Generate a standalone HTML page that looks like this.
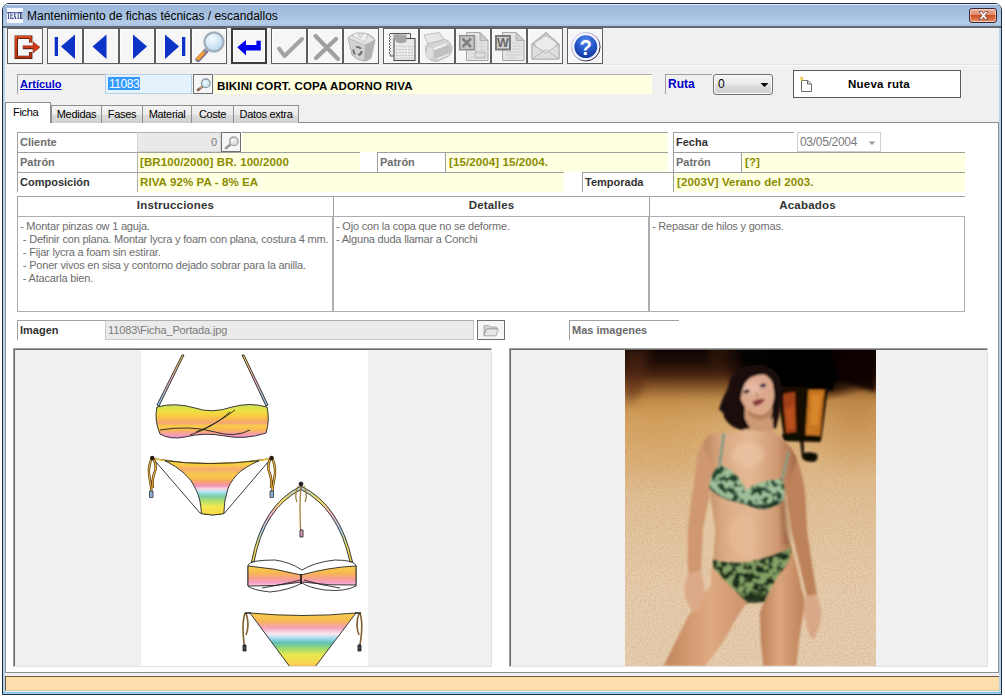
<!DOCTYPE html>
<html lang="es">
<head>
<meta charset="utf-8">
<title>Mantenimiento de fichas técnicas / escandallos</title>
<style>
*{box-sizing:border-box;margin:0;padding:0}
html,body{width:1005px;height:697px;overflow:hidden;background:#fff}
body{font-family:"Liberation Sans",sans-serif;font-size:11px;color:#000;position:relative}
.a{position:absolute;white-space:nowrap;overflow:hidden}
#win{left:2px;top:3px;width:1000px;height:692px;background:#b9d1ea;border:1px solid #1c2b3a;border-radius:7px 7px 0 0}
#title{left:3px;top:4px;width:998px;height:24px;background:linear-gradient(#e4edf8 0,#e4edf8 1px,#9cb7d9 1px,#a3bedf 35%,#b3cbe8 80%,#a9c0dc 91%,#5d6975 92%,#5d6975 100%);font-size:12px;line-height:25px;color:#000;border-radius:5px 5px 0 0}
#client{left:5px;top:28px;width:994px;height:664px;background:#f0f0f0}
.tb{top:28px;width:36px;height:36px;background:#f6f6f6;border:1px solid #5e5e5e;box-shadow:inset 0 0 0 1px #fbfbfb}
.lbl{background:#fff;border-top:1px solid #a0a0a0;border-left:1px solid #a0a0a0;font-weight:bold;height:20px;line-height:17px;padding-left:2px;padding-top:1px;font-size:11px}
.g{color:#6d6d6d}
.y{background:#ffffe1;height:20px;line-height:19px;font-weight:bold;color:#8b8b00;padding-left:3px;font-size:11.5px;letter-spacing:0.1px}
.tab{top:105px;height:18px;background:linear-gradient(#f4f4f4,#ebebeb 50%,#dcdcdc 51%,#d0d0d0);border:1px solid #8e8f8f;border-bottom:none;font-size:11px;line-height:16px;text-align:center;letter-spacing:-0.3px}
.txt{background:#fff;border:1px solid #abadb3;font-size:11px;line-height:13px;color:#6d6d6d;padding:3px 2px;letter-spacing:-0.2px;white-space:pre}
.sb{width:20px;height:20px;background:#f6f6f6;border:1px solid #707070}
</style>
</head>
<body>
<div id="win" class="a"></div>
<div id="title" class="a"><span style="position:absolute;left:24px;top:0">Mantenimiento de fichas técnicas / escandallos</span></div>
<div class="a" style="left:7px;top:8px;width:16px;height:15px;background:#f4f8fd"><span style="position:absolute;left:0;top:3px;font-family:'Liberation Serif',serif;font-weight:bold;font-size:10px;line-height:10px;color:#0a1a6a;letter-spacing:-0.6px;transform:scaleX(0.5);transform-origin:0 0">TEXTIL</span></div>
<div class="a" style="left:969px;top:8px;width:28px;height:15px;border:1px solid #3c2430;border-radius:3px;background:linear-gradient(#eeb49e,#e08a6c 45%,#cf5226 50%,#d96a3e 75%,#e8a080);box-shadow:inset 0 0 0 1px rgba(255,235,225,0.55)"><svg class="a" style="left:7px;top:1px" width="13" height="11" viewBox="0 0 13 11"><path d="M2 1.5 L4.8 1.5 L6.5 3.8 L8.2 1.5 L11 1.5 L8 5.5 L11 9.5 L8.2 9.5 L6.5 7.2 L4.8 9.5 L2 9.5 L5 5.5Z" fill="#fff" stroke="#5a3a40" stroke-width="0.7"/></svg></div>
<div id="client" class="a"></div>
<div class="a" style="left:5px;top:64px;width:994px;height:1px;background:#e2e2e2"></div><div class="a" style="left:5px;top:65px;width:994px;height:1px;background:#fcfcfc"></div>

<!-- toolbar -->
<div id="toolbar">
<div class="a tb" style="left:7px"><svg class="a" style="left:-1px;top:-1px" width="36" height="36" viewBox="0 0 36 36"><defs><linearGradient id="exg" x1="0" y1="0" x2="0" y2="1"><stop offset="0" stop-color="#d8481a"/><stop offset="1" stop-color="#b03410"/></linearGradient></defs>
<path d="M23.7 14.6 L23.7 9.3 L9.3 9.3 L9.3 29.4 L23.7 29.4 L23.7 24.1" fill="none" stroke="#4a1608" stroke-width="3.4" stroke-linejoin="miter"/><path d="M23.5 14.3 L23.5 9.1 L9.1 9.1 L9.1 29.2 L23.5 29.2 L23.5 24.3" fill="none" stroke="url(#exg)" stroke-width="2.2"/><path d="M16 17.8 L26 17.8 L26 13.8 L33 19.3 L26 25 L26 20.8 L16 20.8Z" fill="#cf3c16" stroke="#7a2210" stroke-width="0.5"/><path d="M16 20.6 L26 20.6" stroke="#5a1a0a" stroke-width="0.9"/></svg></div>
<div class="a tb" style="left:47px"><svg class="a" style="left:-1px;top:-1px" width="36" height="36" viewBox="0 0 36 36"><rect x="7.7" y="9" width="3.3" height="19" fill="#0c32c8"/><path d="M14 18.5 L28 6.5 L28 31Z" fill="#0c32c8"/></svg></div>
<div class="a tb" style="left:83px"><svg class="a" style="left:-1px;top:-1px" width="36" height="36" viewBox="0 0 36 36"><path d="M9.5 18.5 L23.5 6.5 L23.5 31Z" fill="#0c32c8"/></svg></div>
<div class="a tb" style="left:119px"><svg class="a" style="left:-1px;top:-1px" width="36" height="36" viewBox="0 0 36 36"><path d="M28 18.5 L14 6.5 L14 31Z" fill="#0c32c8"/></svg></div>
<div class="a tb" style="left:155px"><svg class="a" style="left:-1px;top:-1px" width="36" height="36" viewBox="0 0 36 36"><rect x="27" y="9" width="3.3" height="19" fill="#0c32c8"/><path d="M24 18.5 L10 6.5 L10 31Z" fill="#0c32c8"/></svg></div>
<div class="a tb" style="left:191px"><svg class="a" style="left:-1px;top:-1px" width="36" height="36" viewBox="0 0 36 36"><defs><radialGradient id="lens" cx="0.4" cy="0.35" r="0.7"><stop offset="0" stop-color="#f4fbff"/><stop offset="0.6" stop-color="#cfe6f6"/><stop offset="1" stop-color="#a8cde8"/></radialGradient></defs>
<path d="M15 23 L7 31.5" stroke="#7a6a8a" stroke-width="5" stroke-linecap="round"/><path d="M14.5 22.5 L7 30.5" stroke="#f0a030" stroke-width="3.4" stroke-linecap="round"/><path d="M16 21 L13 24.5" stroke="#8a8a9a" stroke-width="3.5"/>
<circle cx="23" cy="14" r="9.6" fill="url(#lens)" stroke="#9aa6b4" stroke-width="2"/><circle cx="23" cy="14" r="10.6" fill="none" stroke="#c8d0d8" stroke-width="0.8"/></svg></div>
<div class="a tb" style="left:231px;border:2px solid #3c3c3c"><svg class="a" style="left:-2px;top:-2px" width="36" height="36" viewBox="0 0 36 36"><path d="M6.3 19.3 L15 12 L15 17 L25.4 17 L25.4 12.7 L29.8 12.7 L29.8 22.5 L15 22.5 L15 27.6Z" fill="#0000f0"/></svg></div>
<div class="a tb" style="left:271px"><svg class="a" style="left:-1px;top:-1px" width="36" height="36" viewBox="0 0 36 36"><path d="M8 20.5 L13.5 28 L31 11" fill="none" stroke="#a4a4a4" stroke-width="4" stroke-linecap="round" stroke-linejoin="round"/></svg></div>
<div class="a tb" style="left:307px"><svg class="a" style="left:-1px;top:-1px" width="36" height="36" viewBox="0 0 36 36"><path d="M8.5 8 L31 31 M29 11 L9 30" fill="none" stroke="#a0a0a0" stroke-width="4.2" stroke-linecap="round"/></svg></div>
<div class="a tb" style="left:343px"><svg class="a" style="left:-1px;top:-1px" width="36" height="36" viewBox="0 0 36 36"><path d="M5 10 Q8 6 18 5 Q28 5 32 12 L28 30 Q24 34 20 33 Q12 31 9 27Z" fill="#d2d2d2" stroke="#a8a8a8" stroke-width="0.8"/>
<path d="M5 10 Q14 14 22 17 L32 12 Q26 6 18 5 Q8 6 5 10Z" fill="#e4e4e4" stroke="#aaa" stroke-width="0.6"/>
<path d="M22 17 L32 12 L28 30 Q24 34 21 33Z" fill="#b2b2b2"/>
<path d="M9 8 L14 4 L17 10 L21 5 L25 7 L22 14Z" fill="#eeeeee" stroke="#b0b0b0" stroke-width="0.6"/>
<circle cx="14.5" cy="23" r="4" fill="none" stroke="#747474" stroke-width="2.2" stroke-dasharray="5.4 3"/></svg></div>
<div class="a tb" style="left:383px"><svg class="a" style="left:-1px;top:-1px" width="36" height="36" viewBox="0 0 36 36"><path d="M7 5.500 L27.500 5.500 L27.500 28 L7 28" fill="#ececec" stroke="#555" stroke-width="1"/><path d="M7 5.500 L6 7 L7.500 8.500 L6 10 L7.500 11.500 L6 13 L7.500 14.500 L6 16 L7.500 17.500 L6 19 L7.500 20.500 L6 22 L7.500 23.500 L6 25 L7.500 26.500 L7 28" fill="none" stroke="#555" stroke-width="0.9"/>
<rect x="11" y="10.500" width="21" height="22" fill="#e9e9e9" stroke="#4a4a4a" stroke-width="1.1"/>
<path d="M10 7 Q14 5.500 17 6.500 L23.500 6.500 L23.500 14 Q18 16 14 14.500 Q11 12 10 7Z" fill="#a4a4a4"/>
<g fill="#9a9a9a"><circle cx="14" cy="18.5" r=".55"/><circle cx="17" cy="18.5" r=".55"/><circle cx="20" cy="18.5" r=".55"/><circle cx="23" cy="18.5" r=".55"/><circle cx="26" cy="18.5" r=".55"/><circle cx="29" cy="18.5" r=".55"/><circle cx="14" cy="21.5" r=".55"/><circle cx="17" cy="21.5" r=".55"/><circle cx="20" cy="21.5" r=".55"/><circle cx="23" cy="21.5" r=".55"/><circle cx="26" cy="21.5" r=".55"/><circle cx="29" cy="21.5" r=".55"/><circle cx="14" cy="24.5" r=".55"/><circle cx="17" cy="24.5" r=".55"/><circle cx="20" cy="24.5" r=".55"/><circle cx="23" cy="24.5" r=".55"/><circle cx="26" cy="24.5" r=".55"/><circle cx="29" cy="24.5" r=".55"/><circle cx="14" cy="27.5" r=".55"/><circle cx="17" cy="27.5" r=".55"/><circle cx="20" cy="27.5" r=".55"/><circle cx="23" cy="27.5" r=".55"/><circle cx="26" cy="27.5" r=".55"/><circle cx="29" cy="27.5" r=".55"/><circle cx="14" cy="30" r=".55"/><circle cx="17" cy="30" r=".55"/><circle cx="20" cy="30" r=".55"/><circle cx="23" cy="30" r=".55"/><circle cx="26" cy="30" r=".55"/><circle cx="29" cy="30" r=".55"/></g></svg></div>
<div class="a tb" style="left:419px"><svg class="a" style="left:-1px;top:-1px" width="36" height="36" viewBox="0 0 36 36"><path d="M5 7 L20.500 4.500 L27.500 15 L11 21.500Z" fill="#e6e6e6" stroke="#b4b4b4" stroke-width="0.8"/>
<path d="M6.500 21 Q5.500 17 10 15.500 L25 11.500 Q31 12 33 19 Q33.500 25 30 28 L18 33.500 Q13 34 10 30.500 Q6.500 27 6.500 21Z" fill="#d4d4d4" stroke="#b2b2b2" stroke-width="0.8"/>
<path d="M15 22.500 L30 16.500 Q33 21 30.500 27 L18 32.500 Q14 28.500 15 22.500Z" fill="#c0c0c0"/>
<path d="M11 21.500 L27.500 15 L28 17 L12 23.500Z" fill="#f0f0f0"/>
<ellipse cx="11" cy="25" rx="4.200" ry="6.500" fill="#dedede" stroke="#b4b4b4" stroke-width="0.6"/>
<path d="M18 31 L30 26" stroke="#e8e8e8" stroke-width="1.5"/></svg></div>
<div class="a tb" style="left:455px"><svg class="a" style="left:-1px;top:-1px" width="36" height="36" viewBox="0 0 36 36"><path d="M11.500 4.500 L25 4.500 L33 12.500 L33 32.500 L11.500 32.500Z" fill="#e4e4e4" stroke="#a6a6a6" stroke-width="1"/><path d="M25 4.500 L25 12.500 L33 12.500Z" fill="#cccccc" stroke="#a6a6a6" stroke-width="0.8"/>
<path d="M14 15 H31 M14 18.500 H31 M14 22 H31 M14 25.500 H31 M14 29 H31 M21 8 V30 M26.500 13 V30" stroke="#cacaca" stroke-width="0.7"/>
<path d="M20 24 H30 V30 H20Z" fill="none" stroke="#b8b8b8" stroke-width="1"/>
<rect x="4.700" y="7.700" width="14.600" height="14" fill="#c6c6c6" stroke="#8e8e8e" stroke-width="1.500"/>
<path d="M7.500 10.500 L16 19 M16 10.500 L7.500 19" stroke="#808080" stroke-width="2.600"/></svg></div>
<div class="a tb" style="left:491px"><svg class="a" style="left:-1px;top:-1px" width="36" height="36" viewBox="0 0 36 36"><path d="M11.500 4.500 L25 4.500 L33 12.500 L33 32.500 L11.500 32.500Z" fill="#e4e4e4" stroke="#a6a6a6" stroke-width="1"/><path d="M25 4.500 L25 12.500 L33 12.500Z" fill="#cccccc" stroke="#a6a6a6" stroke-width="0.8"/>
<path d="M21 15 H30 M21 18 H30 M21 21 H30 M15 24 H30 M15 27 H30 M15 30 H27" stroke="#c6c6c6" stroke-width="0.8"/>
<rect x="5" y="8" width="14" height="13.500" fill="#d2d2d2" stroke="#7a7a7a" stroke-width="2"/>
<text x="12" y="19.300" text-anchor="middle" font-family="Liberation Sans, sans-serif" font-weight="bold" font-size="12.500" fill="#6a6a6a">W</text></svg></div>
<div class="a tb" style="left:527px"><svg class="a" style="left:-1px;top:-1px" width="36" height="36" viewBox="0 0 36 36"><path d="M5 16 L19 4.500 L32 16 L32 31 L5 31Z" fill="#dadada" stroke="#a8a8a8" stroke-width="1"/>
<path d="M5 16 L19 4.500 L32 16 L19 24Z" fill="#cacaca" stroke="#a8a8a8" stroke-width="0.8"/>
<path d="M8 14.500 L19 8 L29 14.500 L29 20 L19 25 L8 20Z" fill="#ececec" stroke="#c0c0c0" stroke-width="0.6"/>
<path d="M5 16 L19 25 L32 16 L32 31 L5 31Z" fill="#dedede" stroke="#a8a8a8" stroke-width="0.8"/>
<path d="M5 31 L19 21.500 L32 31" fill="none" stroke="#b4b4b4" stroke-width="0.9"/></svg></div>
<div class="a tb" style="left:567px"><svg class="a" style="left:-1px;top:-1px" width="36" height="36" viewBox="0 0 36 36"><defs><radialGradient id="hlp" cx="0.5" cy="0.25" r="0.8"><stop offset="0" stop-color="#5a8af0"/><stop offset="0.5" stop-color="#2456c8"/><stop offset="1" stop-color="#12379a"/></radialGradient>
<linearGradient id="hring" x1="0.2" y1="0.2" x2="0.85" y2="0.85"><stop offset="0" stop-color="#c8c8e8"/><stop offset="0.5" stop-color="#9090b8"/><stop offset="1" stop-color="#15152a"/></linearGradient></defs>
<circle cx="18.8" cy="18.7" r="14.3" fill="#f2f5ff" stroke="url(#hring)" stroke-width="1"/><circle cx="18.8" cy="18.7" r="11.4" fill="url(#hlp)"/>
<text x="0" y="0" transform="translate(18.8 27) scale(0.9 1)" text-anchor="middle" font-family="Liberation Sans, sans-serif" font-weight="bold" font-size="22.5" fill="#fff">?</text></svg></div>
</div><!-- /toolbar -->

<!-- header row -->
<div class="a lbl" style="left:17px;top:74px;width:88px;color:#0000cc;text-decoration:underline;background:#f0f0f0;line-height:16px">Artículo</div>
<div class="a" style="left:105px;top:74px;width:87px;height:20px;background:#e6f2fb;border:1px solid #b5cfe7"><span style="position:absolute;left:2px;top:2px;height:13px;line-height:14px;background:#3399ff;color:#fff;font-size:12px;letter-spacing:-0.45px;padding:0 1px 0 1px">11083</span></div>
<div class="a sb" style="left:193px;top:74px"><svg class="a" style="left:-1px;top:-1px" width="20" height="20" viewBox="0 0 20 20"><path d="M9.5 12.5 L5 16" stroke="#8a5a48" stroke-width="2.6" stroke-linecap="round"/><path d="M9 12.4 L6.5 14.4" stroke="#d8a088" stroke-width="1.6"/><circle cx="12.8" cy="9.3" r="4.3" fill="#d4ecf8" stroke="#8a98a8" stroke-width="1.3"/><circle cx="11.8" cy="8.3" r="1.6" fill="#f4fbff"/></svg></div>
<div class="a y" style="left:214px;top:74px;width:438px;border-top:1px solid #b0b0b0;color:#000;letter-spacing:0.16px;line-height:22px">BIKINI CORT. COPA ADORNO RIVA</div>
<div class="a lbl" style="left:665px;top:74px;width:47px;color:#0000cc;background:#f0f0f0;line-height:17px;font-size:12px">Ruta</div>
<div class="a" style="left:713px;top:74px;width:60px;height:21px;border:1px solid #707070;border-radius:3px;background:linear-gradient(#f4f4f4,#ebebeb 45%,#dddddd 55%,#cfcfcf);line-height:19px;padding-left:4px;font-size:12px;box-shadow:inset 0 0 0 1px #fbfbfb">0<svg class="a" style="left:46px;top:7px" width="9" height="6" viewBox="0 0 9 6"><path d="M0.5 1 L8.5 1 L4.5 5Z" fill="#000"/></svg></div>
<div class="a" style="left:793px;top:70px;width:168px;height:28px;background:#fff;border:1px solid #5a5a5a;font-weight:bold;line-height:27px;font-size:11.5px"><span style="position:absolute;left:54px;top:0;letter-spacing:0.25px">Nueva ruta</span><svg class="a" style="left:5px;top:5px" width="15" height="17" viewBox="0 0 15 17"><path d="M2.5 4.5 L8.5 4.5 L12.5 8 L12.5 15.5 L2.5 15.5Z" fill="#fff" stroke="#6a6a6a" stroke-width="1"/><path d="M8.5 4.5 L8.5 8 L12.5 8" fill="none" stroke="#6a6a6a" stroke-width="1"/><path d="M1 1 L4.5 4.5 M1 4.5 L4.5 1 M2.7 0.5 L2.7 5" stroke="#e8c020" stroke-width="0.9"/></svg></div>

<!-- tabs -->
<div class="a" style="left:5px;top:122px;width:994px;height:551px;background:#fff;border:1px solid #8e8f8f"></div>
<div class="a tab" style="left:51px;width:51px">Medidas</div>
<div class="a tab" style="left:101px;width:42px">Fases</div>
<div class="a tab" style="left:142px;width:50px">Material</div>
<div class="a tab" style="left:191px;width:43px">Coste</div>
<div class="a tab" style="left:233px;width:66px">Datos extra</div>
<div class="a tab" style="left:5px;top:102px;width:46px;height:21px;background:#fff;line-height:19px;text-align:left;padding-left:7px">Ficha</div>


<!-- form rows -->
<div class="a lbl g" style="left:17px;top:132px;width:120px">Cliente</div>
<div class="a" style="left:137px;top:132px;width:84px;height:20px;background:#e9e9e9;border:1px solid #d6d6d6;border-top-color:#b4b4b4;color:#7a7a7a;text-align:right;padding-right:3px;line-height:18px">0</div>
<div class="a sb" style="left:221px;top:132px"><svg class="a" style="left:-1px;top:-1px" width="20" height="20" viewBox="0 0 20 20"><path d="M9.5 12.5 L5 16" stroke="#9a9a9a" stroke-width="2.8" stroke-linecap="round"/><circle cx="12.8" cy="9.3" r="4.3" fill="#e4e4e4" stroke="#a4a4a4" stroke-width="1.4"/><circle cx="11.8" cy="8.3" r="1.6" fill="#f6f6f6"/></svg></div>
<div class="a y" style="left:242px;top:132px;width:426px;border-top:1px solid #a0a0a0"></div>
<div class="a lbl" style="left:673px;top:132px;width:121px;color:#333">Fecha</div>
<div class="a" style="left:797px;top:132px;width:84px;height:20px;background:#fff;border:1px solid #d0d0d0;color:#7a7a7a;line-height:18px;padding-left:2px;font-size:12px;letter-spacing:-0.3px">03/05/2004<svg class="a" style="left:70px;top:8px" width="8" height="5" viewBox="0 0 8 5"><path d="M0.5 0.5 L7.5 0.5 L4 4Z" fill="#9a9a9a"/></svg></div>

<div class="a lbl g" style="left:17px;top:152px;width:120px">Patrón</div>
<div class="a y" style="left:137px;top:152px;width:223px;border-top:1px solid #a0a0a0;border-left:1px solid #b0b0b0;padding-left:2px">[BR100/2000] BR. 100/2000</div>
<div class="a lbl g" style="left:377px;top:152px;width:68px">Patrón</div>
<div class="a y" style="left:445px;top:152px;width:223px;border-top:1px solid #a0a0a0;border-left:1px solid #a0a0a0">[15/2004] 15/2004.</div>
<div class="a lbl g" style="left:673px;top:152px;width:68px">Patrón</div>
<div class="a y" style="left:741px;top:152px;width:224px;border-top:1px solid #a0a0a0;border-left:1px solid #a0a0a0">[?]</div>

<div class="a lbl" style="left:17px;top:172px;width:120px;color:#333">Composición</div>
<div class="a y" style="left:137px;top:172px;width:427px;border-top:1px solid #a0a0a0;border-left:1px solid #b0b0b0;padding-left:2px">RIVA 92% PA - 8% EA</div>
<div class="a lbl" style="left:582px;top:172px;width:91px;color:#333">Temporada</div>
<div class="a y" style="left:673px;top:172px;width:292px;border-top:1px solid #a0a0a0;border-left:1px solid #a0a0a0">[2003V] Verano del 2003.</div>

<!-- text areas -->
<div class="a lbl" style="left:17px;top:196px;width:316px;line-height:17px;text-align:center;color:#333;padding:0;font-size:11.5px;letter-spacing:0.2px">Instrucciones</div>
<div class="a lbl" style="left:333px;top:196px;width:316px;line-height:17px;text-align:center;color:#333;padding:0;font-size:11.5px;letter-spacing:0.2px">Detalles</div>
<div class="a lbl" style="left:649px;top:196px;width:316px;line-height:17px;text-align:center;color:#333;padding:0;font-size:11.5px;letter-spacing:0.2px">Acabados</div>
<div class="a txt" style="left:17px;top:216px;width:316px;height:96px">- Montar pinzas ow 1 aguja.
 - Definir con plana. Montar lycra y foam con plana, costura 4 mm.
 - Fijar lycra a foam sin estirar.
 - Poner vivos en sisa y contorno dejado sobrar para la anilla.
 - Atacarla bien.</div>
<div class="a txt" style="left:333px;top:216px;width:316px;height:96px">- Ojo con la copa que no se deforme.
- Alguna duda llamar a Conchi</div>
<div class="a txt" style="left:649px;top:216px;width:316px;height:96px">- Repasar de hilos y gomas.</div>

<!-- imagen row -->
<div class="a lbl" style="left:17px;top:320px;width:88px;color:#333">Imagen</div>
<div class="a" style="left:105px;top:320px;width:369px;height:20px;background:#ebebeb;border:1px solid #c8c8c8;border-top-color:#adadad;color:#7a7a7a;line-height:18px;padding-left:2px;letter-spacing:-0.12px">11083\Ficha_Portada.jpg</div>
<div class="a sb" style="left:477px;top:320px;width:28px"><svg class="a" style="left:5px;top:3px" width="16" height="13" viewBox="0 0 16 13"><path d="M1 2.5 Q1 1.5 2 1.5 L6 1.5 L7.5 3 L13 3 Q14 3 14 4 L14 5 L3.5 5 L1 11Z" fill="#d4d4d4" stroke="#9a9a9a" stroke-width="0.8"/><path d="M3.6 5 L15.3 5 L13 11.8 L1 11.8Z" fill="#e8e8e8" stroke="#9a9a9a" stroke-width="0.8"/></svg></div>
<div class="a lbl" style="left:569px;top:320px;width:110px;color:#6a6a6a">Mas imagenes</div>

<!-- image panels -->
<div class="a" id="p1" style="left:13px;top:348px;width:479px;height:319px;background:#f0f0f0;border-top:1px solid #a0a0a0;border-left:1px solid #a0a0a0;border-right:1px solid #e3e3e3;border-bottom:1px solid #e3e3e3;box-shadow:inset 1px 1px 0 #696969"></div>
<div class="a" id="p2" style="left:509px;top:348px;width:479px;height:319px;background:#f0f0f0;border-top:1px solid #a0a0a0;border-left:1px solid #a0a0a0;border-right:1px solid #e3e3e3;border-bottom:1px solid #e3e3e3;box-shadow:inset 1px 1px 0 #696969"></div>

<!-- SKETCH -->
<svg class="a" style="left:141px;top:350px" width="227" height="316" viewBox="141 350 227 316">
<defs>
<linearGradient id="s1" x1="0" y1="404" x2="0" y2="438" gradientUnits="userSpaceOnUse">
<stop offset="0" stop-color="#c4dc60"/><stop offset="0.18" stop-color="#e8e448"/><stop offset="0.32" stop-color="#f8d040"/><stop offset="0.45" stop-color="#f8b850"/><stop offset="0.55" stop-color="#f8a478"/><stop offset="0.65" stop-color="#f8cc48"/><stop offset="0.78" stop-color="#f8b460"/><stop offset="0.9" stop-color="#f49cb4"/><stop offset="1" stop-color="#e890c8"/>
</linearGradient>
<linearGradient id="s2" x1="0" y1="460" x2="0" y2="515" gradientUnits="userSpaceOnUse">
<stop offset="0" stop-color="#f8d840"/><stop offset="0.1" stop-color="#f8c848"/><stop offset="0.17" stop-color="#f8a870"/><stop offset="0.25" stop-color="#f8c850"/><stop offset="0.33" stop-color="#f8c048"/><stop offset="0.4" stop-color="#f8a070"/><stop offset="0.47" stop-color="#f490b8"/><stop offset="0.52" stop-color="#fad4e4"/><stop offset="0.58" stop-color="#b0e4f4"/><stop offset="0.66" stop-color="#78cca8"/><stop offset="0.75" stop-color="#b8e068"/><stop offset="0.85" stop-color="#f4e850"/><stop offset="1" stop-color="#f8d848"/>
</linearGradient>
<linearGradient id="s3" x1="0" y1="565" x2="0" y2="587" gradientUnits="userSpaceOnUse">
<stop offset="0" stop-color="#f8d850"/><stop offset="0.35" stop-color="#f8b850"/><stop offset="0.6" stop-color="#f8a088"/><stop offset="0.8" stop-color="#f4a0c8"/><stop offset="1" stop-color="#fbe0f0"/>
</linearGradient>
<linearGradient id="s4" x1="0" y1="613" x2="0" y2="668" gradientUnits="userSpaceOnUse">
<stop offset="0" stop-color="#f8d048"/><stop offset="0.15" stop-color="#f8b858"/><stop offset="0.27" stop-color="#f4a0b8"/><stop offset="0.38" stop-color="#fce8f0"/><stop offset="0.46" stop-color="#a8dcf0"/><stop offset="0.54" stop-color="#60c0b8"/><stop offset="0.64" stop-color="#98d870"/><stop offset="0.76" stop-color="#e8e850"/><stop offset="0.9" stop-color="#f8d850"/><stop offset="1" stop-color="#f8b060"/>
</linearGradient>
<linearGradient id="st" x1="0" y1="355" x2="0" y2="405" gradientUnits="userSpaceOnUse">
<stop offset="0" stop-color="#f8d850"/><stop offset="0.5" stop-color="#f4b0c0"/><stop offset="1" stop-color="#90c8e8"/>
</linearGradient>
<linearGradient id="st2" x1="0" y1="486" x2="0" y2="562" gradientUnits="userSpaceOnUse">
<stop offset="0" stop-color="#a8cce0"/><stop offset="0.18" stop-color="#f0e060"/><stop offset="0.38" stop-color="#f4b0c0"/><stop offset="0.58" stop-color="#a0d0e8"/><stop offset="0.78" stop-color="#f0e468"/><stop offset="1" stop-color="#f4d850"/>
</linearGradient>
</defs>
<rect x="141" y="349" width="227" height="317" fill="#fff"/>
<g stroke="#1a1a1a" stroke-width="0.85" fill="none" stroke-linejoin="round">
<!-- top 1 straps -->
<path d="M182 355 L184 355 L159 406 L157 405Z" fill="url(#st)"/>
<path d="M242 355 L244 355 L268 405 L266 406Z" fill="url(#st)"/>
<!-- bandeau 1 -->
<path d="M157 407 Q175 402 195 408 Q212 414 232 407 Q250 402 267 407 Q270 420 266 433 Q245 440 225 436 Q205 432 185 437 Q170 440 160 434 Q154 420 157 407Z" fill="url(#s1)"/>
<path d="M196 432 Q215 425 235 410 M190 435 Q212 428 230 412 M160 430 Q190 425 215 432 Q235 438 250 430"/>
<!-- bottom 1 -->
<path d="M153 458.500 Q212 469 271 458.500 L224.600 513 Q213 516.500 200 513Z" fill="#fff"/>
<path d="M153 458.500 L165 460.700 Q208 466.500 259 460.700 L271 458.500" stroke="#e8c030" stroke-width="1.6"/>
<path d="M165 460.700 Q208 466.500 259 460.700 Q243 468 236.500 475 Q229 484 227.600 490 Q224 500 223.800 513.700 Q213 516.500 201.400 513.700 Q201 500 196.200 490 Q192 480 184.300 473.400 Q176 466 165 460.700Z" fill="url(#s2)"/>
<!-- ties 1 -->
<g stroke="#4a3010" stroke-width="2.4"><path d="M152 458 Q147 468 150 480 Q152 490 151 496 M153 458 Q158 466 154 474 Q152 480 153 488"/><path d="M272 458 Q277 468 274 480 Q272 490 272 496 M271 458 Q266 466 270 474 Q272 480 271 488"/></g>
<g stroke="#f0b840" stroke-width="1.1"><path d="M152 458 Q147 468 150 480 Q152 490 151 496 M153 458 Q158 466 154 474 Q152 480 153 488"/><path d="M272 458 Q277 468 274 480 Q272 490 272 496 M271 458 Q266 466 270 474 Q272 480 271 488"/></g>
<circle cx="152.200" cy="458" r="2.200" fill="#2a1a10" stroke="none"/><circle cx="271.600" cy="458" r="2.200" fill="#2a1a10" stroke="none"/>
<rect x="149.500" y="491" width="3.500" height="6.500" fill="#8ab0d0" stroke="#334" stroke-width="0.8"/><rect x="270" y="491" width="3.500" height="6.500" fill="#8ab0d0" stroke="#334" stroke-width="0.8"/>
<!-- halter 2 -->
<path d="M301 486 Q262 505 251.500 562 L254 562 Q264 508 301 489.500Z" fill="url(#st2)"/>
<path d="M301 486 Q340 505 352.500 562 L350 562 Q338 508 301 489.500Z" fill="url(#st2)"/>
<path d="M301 484 Q299 510 301 536 M298 486 Q294 495 297 502 M304 486 Q308 495 305 502" stroke="#a08040" stroke-width="1.3"/>
<circle cx="301" cy="484" r="2" fill="#222"/>
<rect x="300" y="530" width="3" height="7" fill="#e8a0c0"/>
<!-- bandeau 2 -->
<path d="M248 565 Q250 560 275 560 Q290 562 302 570 Q315 562 335 560 Q352 560 356 565 L356 586 Q345 592 325 590 Q310 588 302 583 Q290 590 270 592 Q252 590 248 586Z" fill="#fff"/>
<path d="M248 566 Q275 568 301 575 Q330 567 356 566 L356 585 Q330 586 302 582 Q275 587 248 586Z" fill="url(#s3)"/>
<path d="M301 574 L301 584" stroke="#111" stroke-width="1.6"/>
<path d="M262 588 Q285 584 300 580 M340 588 Q320 585 304 580"/>
<!-- bottom 2 -->
<path d="M250 613 Q303 618 356 613 L315 667 L290 667Z" fill="url(#s4)"/>
<path d="M245 613 Q241 625 245 650 M246 613 Q250 625 246 635" stroke="#806030" stroke-width="1.6"/>
<path d="M360 613 Q364 625 359 650 M359 613 Q355 625 359 635" stroke="#806030" stroke-width="1.6"/>
<path d="M245 613 L251 613 M355 613 L361 613" stroke="#222" stroke-width="1.5"/>
<rect x="243" y="645" width="3" height="6" fill="#445"/><rect x="358" y="645" width="3" height="6" fill="#445"/>
</g>
</svg>
<!-- /SKETCH -->
<!-- PHOTO -->
<svg class="a" style="left:625px;top:350px" width="251" height="316" viewBox="625 350 251 316">
<defs>
<linearGradient id="wall" x1="0" y1="349" x2="0" y2="666" gradientUnits="userSpaceOnUse">
<stop offset="0" stop-color="#b98a48"/><stop offset="0.14" stop-color="#d3a463"/><stop offset="0.3" stop-color="#dcb37c"/><stop offset="0.5" stop-color="#e2c39c"/><stop offset="0.75" stop-color="#e7cdae"/><stop offset="1" stop-color="#e6cfb3"/>
</linearGradient>
<linearGradient id="shadow" x1="0" y1="349" x2="0" y2="425" gradientUnits="userSpaceOnUse">
<stop offset="0" stop-color="#0e0503" stop-opacity="1"/><stop offset="0.18" stop-color="#200d06" stop-opacity="1"/><stop offset="0.34" stop-color="#42200e" stop-opacity="0.96"/><stop offset="0.5" stop-color="#7a4a20" stop-opacity="0.85"/><stop offset="0.68" stop-color="#b07c3c" stop-opacity="0.5"/><stop offset="1" stop-color="#c99a58" stop-opacity="0"/>
</linearGradient>
<radialGradient id="dark" cx="805" cy="352" r="100" gradientUnits="userSpaceOnUse" gradientTransform="translate(0 352) scale(1 0.5) translate(0 -352)">
<stop offset="0" stop-color="#000" stop-opacity="1"/><stop offset="0.62" stop-color="#040201" stop-opacity="1"/><stop offset="0.82" stop-color="#2a1208" stop-opacity="0.8"/><stop offset="1" stop-color="#5a3010" stop-opacity="0"/>
</radialGradient>
<linearGradient id="skinT" x1="705" y1="0" x2="795" y2="0" gradientUnits="userSpaceOnUse">
<stop offset="0" stop-color="#c08a62"/><stop offset="0.2" stop-color="#dbaa84"/><stop offset="0.5" stop-color="#e4b894"/><stop offset="0.8" stop-color="#cf9a74"/><stop offset="1" stop-color="#a86c48"/>
</linearGradient>
<linearGradient id="skinL" x1="670" y1="0" x2="750" y2="0" gradientUnits="userSpaceOnUse">
<stop offset="0" stop-color="#c48a60"/><stop offset="0.5" stop-color="#e0aa80"/><stop offset="1" stop-color="#c8906a"/>
</linearGradient>
<linearGradient id="skinR" x1="758" y1="0" x2="805" y2="0" gradientUnits="userSpaceOnUse">
<stop offset="0" stop-color="#b87c54"/><stop offset="0.45" stop-color="#dca67c"/><stop offset="1" stop-color="#bc8058"/>
</linearGradient>
<radialGradient id="glowL" cx="655" cy="405" r="90" gradientUnits="userSpaceOnUse"><stop offset="0" stop-color="#cf9448" stop-opacity="0.55"/><stop offset="1" stop-color="#cf9448" stop-opacity="0"/></radialGradient>
<radialGradient id="glowR" cx="856" cy="410" r="70" gradientUnits="userSpaceOnUse"><stop offset="0" stop-color="#b87a38" stop-opacity="0.65"/><stop offset="1" stop-color="#c88c48" stop-opacity="0"/></radialGradient>
<filter id="bl" x="-10%" y="-10%" width="120%" height="120%"><feGaussianBlur stdDeviation="0.9"/></filter>
<filter id="bl2" x="-60%" y="-60%" width="220%" height="220%"><feGaussianBlur stdDeviation="2"/></filter>
<filter id="bl4" x="-100%" y="-100%" width="300%" height="300%"><feGaussianBlur stdDeviation="5"/></filter>
<filter id="noise" color-interpolation-filters="sRGB" x="0" y="0" width="100%" height="100%"><feTurbulence type="fractalNoise" baseFrequency="0.6" numOctaves="2" seed="3"/><feColorMatrix values="0 0 0 0 0.72  0 0 0 0 0.52  0 0 0 0 0.30  1.6 0 0 0 -0.62"/></filter>
<filter id="camo" color-interpolation-filters="sRGB" x="0" y="0" width="100%" height="100%"><feTurbulence type="fractalNoise" baseFrequency="0.16" numOctaves="2" seed="8"/><feColorMatrix values="0 0 0 0 0.14  0 0 0 0 0.27  0 0 0 0 0.18  9 0 0 0 -4.2"/></filter>
<filter id="camo2" color-interpolation-filters="sRGB" x="0" y="0" width="100%" height="100%"><feTurbulence type="fractalNoise" baseFrequency="0.15" numOctaves="2" seed="21"/><feColorMatrix values="0 0 0 0 0.11  0 0 0 0 0.18  0 0 0 0 0.10  10 0 0 0 -4.6"/></filter>
<clipPath id="ctop"><path d="M709 487 Q712 470 720 465 Q736 470 746 490 Q760 480 782 479 Q786 490 784 500 Q772 511 756 508 Q744 504 738 502 Q720 500 709 487Z"/></clipPath>
<clipPath id="cbot"><path d="M713 560 Q748 569 791.500 547.500 Q790 558 787 564 Q772 582 764 602 L748 603 Q730 586 714 569Z"/></clipPath>
</defs>
<rect x="625" y="349" width="251" height="317" fill="url(#wall)"/>
<!-- warm glow upper-left & right -->
<rect x="625" y="349" width="251" height="200" fill="url(#glowL)"/>
<rect x="625" y="349" width="251" height="200" fill="url(#glowR)"/>
<rect x="625" y="349" width="251" height="317" filter="url(#noise)" opacity="0.4"/>
<rect x="625" y="349" width="251" height="78" fill="url(#shadow)"/>
<path d="M625 349 L650 349 L640 395 L625 405Z" fill="#5a2c12" opacity="0.55" filter="url(#bl4)"/>
<rect x="690" y="349" width="186" height="62" fill="url(#dark)"/>
<path d="M830 349 L876 349 L876 392 Q858 388 838 378Z" fill="#0c0503" opacity="0.9" filter="url(#bl2)"/>
<!-- lantern -->
<g filter="url(#bl)">
<path d="M770 366 L836 372 L833 390 L776 388Z" fill="#030201"/>
<path d="M776 386 L828 388 L821 441 L784 437Z" fill="#140a05"/>
<path d="M782.500 394 L795 392 L796 432 L786 433Z" fill="#a04016"/>
<path d="M785 410 L794 405 L795 428 L787 430Z" fill="#b8501c"/>
<path d="M808.500 390 L824.500 390 L820 436 L805.500 435Z" fill="#c87420"/>
<path d="M812 395 L821 395 L818 425 L810 425Z" fill="#d8862a"/>
<path d="M782 434 L821 436 L820 442 L783 441Z" fill="#0e0704"/>
<path d="M800 440 L803.500 440 L804 453 Q811 451 817 454 Q819 459 815 461.500 Q806 463 802 458Z" fill="#100805"/>
</g>
<!-- body -->
<g filter="url(#bl)">
<!-- hair back -->
<path d="M719 409 Q722 398 728 388 Q730 370 748 366 Q766 362 776 372 Q784 382 782 400 Q780 415 776 428 L768 430 L750 430 Q742 432 736 428 Q726 424 724 414Z" fill="#1a110d"/>
<!-- left leg -->
<path d="M713 560 Q710 575 711 585 Q700 600 689 614.500 L663.500 666 L705.500 666 L724.500 640 Q736 618 744 606.500 L748 603 L730 570Z" fill="url(#skinL)"/>
<!-- right leg -->
<path d="M764 601 L791.500 548 Q798 570 801.500 589 Q806 600 803 615 L799 640 L796.500 666 L763.500 666 Q760 640 760 612.500Z" fill="url(#skinR)"/>
<!-- left arm -->
<path d="M705.500 438 Q698 448 696 465 L694.500 480 Q690 505 688 529 L687.500 560 L688.500 576 L701 570 L703 529 L709.500 496 L713.500 470 L716 445Z" fill="#cf9870"/>
<path d="M688 574 Q683 584 685 596 Q688 608 695 612 Q700 610 700 602 L706 596 Q704 584 701 570Z" fill="#dcaa88"/>
<!-- right arm -->
<path d="M786 450 Q796 454 798 462 Q804 480 805.500 496 L807 530 Q812 565 817 595 L807 597 L791.500 530 L789 512 L785 484Z" fill="#bd825a"/>
<path d="M805 596 Q802 610 806 622 Q808 636 814 640 L818 630 Q822 620 821 610 L817 594Z" fill="#d8a888"/>
<!-- torso -->
<path d="M744.500 418 L772.500 418 L773 432 Q788 440 797 458 L790 480 L784 502 L785.500 530 L791.500 548 L787 566 L756 603 L714 568 L713 558 L715.500 530 L710.500 499 L713 470 L704 448 Q704 436 712 434 Q730 434 744 430Z" fill="url(#skinT)"/>
<path d="M710.500 500 L714.500 530 L713.500 556 L704 556 L703.500 529 L708 505Z" fill="#e3c7a2"/>
<!-- chest highlight/shadow -->
<ellipse cx="748" cy="455" rx="16" ry="12" fill="#ecc6a6" opacity="0.7" filter="url(#bl2)"/>
<ellipse cx="742" cy="535" rx="14" ry="20" fill="#e8bc98" opacity="0.6" filter="url(#bl2)"/>
<path d="M780 500 L786 500 L790 545 L784 545Z" fill="#8a5234" opacity="0.6" filter="url(#bl2)"/>
<!-- neck shadow -->

<path d="M745 404 L772 400 L773 432 L744 430Z" fill="#cd9a76"/>
<path d="M748 408 Q760 420 772 406 L772 414 Q760 426 748 414Z" fill="#a8704e" opacity="0.55"/>
<!-- face -->
<path d="M739 388 Q742 374 754 372 Q768 372 773 384 Q776 396 772 406 Q768 414 761 415 Q752 414 746 408 Q739 400 739 388Z" fill="#dba88c"/>
<ellipse cx="752" cy="388" rx="9" ry="7" fill="#e8c0ac" opacity="0.7" filter="url(#bl2)"/>
<!-- eyes, mouth -->
<ellipse cx="746.500" cy="391.500" rx="3.300" ry="1.800" fill="#3a2a38" transform="rotate(-12 746.500 391.500)"/>
<ellipse cx="763" cy="385.500" rx="3.200" ry="1.800" fill="#3a2a48" transform="rotate(-12 763 385.500)"/>
<path d="M752 402 Q758 398 765 399 Q762 405 755 406Z" fill="#8a3a3a"/>
<path d="M756 393 L758 397" stroke="#b07858" stroke-width="1.4"/>
<!-- hair front -->
<path d="M738 392 Q738 376 752 371 Q764 368 772 376 Q760 372 750 378 Q742 384 741 398Z" fill="#1a110d"/>
<path d="M719 409 Q724 404 730 392 Q736 378 746 372 Q740 384 740 400 Q742 416 750 428 Q738 432 730 424 Q722 418 724 412Z" fill="#1a110d"/>
<path d="M772 378 Q780 386 778 402 Q776 414 770 420 Q776 404 774 392Z" fill="#140c0a"/>
</g>
<!-- bikini top -->
<g filter="url(#bl)">
<path d="M722.500 433 L725.500 434 L721 466 L718 465Z" fill="#8c9c84"/>
<path d="M787.500 451 L790 452 L783.500 480 L781 479Z" fill="#8c9c84"/>
<path d="M709 487 Q712 470 720 465 Q736 470 746 490 Q760 480 782 479 Q786 490 784 500 Q772 511 756 508 Q744 504 738 502 Q720 500 709 487Z" fill="#9fc09a"/>
<g clip-path="url(#ctop)"><rect x="705" y="460" width="85" height="55" filter="url(#camo)"/>
<path d="M709 487 Q720 498 738 501 Q756 508 784 500 L784 506 Q760 514 738 506 Q718 502 707 490Z" fill="#1e3424" opacity="0.75"/></g>
<!-- bikini bottom -->
<path d="M713 560 Q748 569 791.500 547.500 Q790 558 787 564 Q772 582 764 602 L748 603 Q730 586 714 569Z" fill="#86a266"/>
<g clip-path="url(#cbot)"><rect x="708" y="545" width="88" height="62" filter="url(#camo2)"/>
<ellipse cx="756" cy="600" rx="12" ry="9" fill="#1a2a18" opacity="0.8" filter="url(#bl2)"/></g>
</g>
</svg>
<!-- /PHOTO -->
<!-- status bar -->
<div class="a" style="left:5px;top:676px;width:994px;height:15px;background:#ffdead;border-top:1px solid #6b5a3e;border-left:1px solid #6b5a3e;border-bottom:1px solid #d8c8b0"></div>
<div class="a" style="left:3px;top:692px;width:998px;height:1px;background:#62c6ee"></div>
</body>
</html>
